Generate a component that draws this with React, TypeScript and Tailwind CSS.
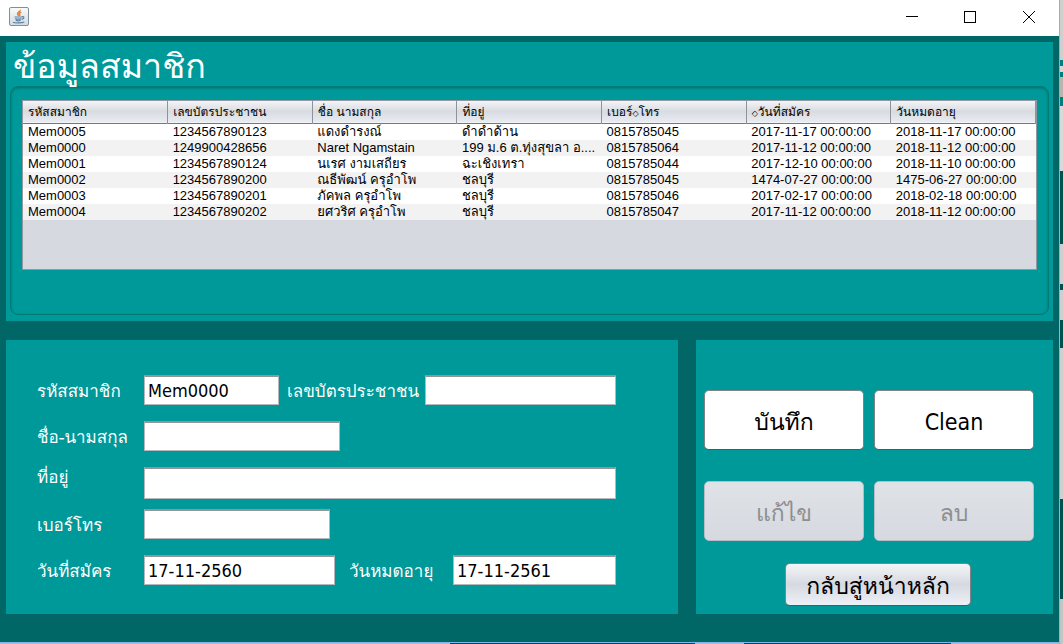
import { useState } from "react";

const columns = ["รหัสสมาชิก", "เลขบัตรประชาชน", "ชื่อ นามสกุล", "ที่อยู่", "เบอร์◇โทร", "◇วันที่สมัคร", "วันหมดอายุ"];

const rows = [
  ["Mem0005", "1234567890123", "แดงดำรงณ์", "ดำดำด้าน", "0815785045", "2017-11-17 00:00:00", "2018-11-17 00:00:00"],
  ["Mem0000", "1249900428656", "Naret Ngamstain", "199 ม.6 ต.ทุ่งสุขลา อ....", "0815785064", "2017-11-12 00:00:00", "2018-11-12 00:00:00"],
  ["Mem0001", "1234567890124", "นเรศ งามเสถียร", "ฉะเชิงเทรา", "0815785044", "2017-12-10 00:00:00", "2018-11-10 00:00:00"],
  ["Mem0002", "1234567890200", "ณธีพัฒน์ ครุอำโพ", "ชลบุรี", "0815785045", "1474-07-27 00:00:00", "1475-06-27 00:00:00"],
  ["Mem0003", "1234567890201", "ภัคพล ครุอำโพ", "ชลบุรี", "0815785046", "2017-02-17 00:00:00", "2018-02-18 00:00:00"],
  ["Mem0004", "1234567890202", "ยศวริศ ครุอำโพ", "ชลบุรี", "0815785047", "2017-11-12 00:00:00", "2018-11-12 00:00:00"],
];

function JavaIcon() {
  return (
    <svg width="20" height="19" viewBox="0 0 20 19" aria-hidden="true">
      <defs>
        <linearGradient id="tile" x1="0" y1="0" x2="0" y2="1">
          <stop offset="0" stopColor="#fafafa" />
          <stop offset="1" stopColor="#cfdbe3" />
        </linearGradient>
      </defs>
      <rect x="0.5" y="0.5" width="19" height="18" rx="1.5" fill="url(#tile)" stroke="#7f8f9c" />
      <path d="M11 3c.8 1.500-3.200 2.500-2.400 4.200.4.900 1 1.200 1 1.800M12.300 5.200c-1.500.5-2.500 1.200-1.800 2.100.6.800.3 1.200-.2 1.700" fill="none" stroke="#e8823a" strokeWidth="1.600" />
      <path d="M5.500 10h8M6.200 11.600c1.500.6 4.500.6 6 0M6.800 13.300c1.500.6 3.500.6 4.800 0M13 9.700c2.600-.5 2.400 2-.4 2.600M4 15.200c2 .9 9 .9 11.300-.2" fill="none" stroke="#5f83a3" strokeWidth="1.200" />
    </svg>
  );
}

function TitleBar() {
  return (
    <header className="flex h-9 items-start justify-between bg-white pl-[9px]">
      <div className="pt-[7px]"><JavaIcon /></div>
      <div className="flex">
        <button aria-label="Minimize" className="flex h-[34px] w-[58px] items-center justify-center">
          <svg width="12" height="12" viewBox="0 0 12 12" stroke="#000"><path d="M0 5.500h12" /></svg>
        </button>
        <button aria-label="Maximize" className="flex h-[34px] w-[58px] items-center justify-center">
          <svg width="12" height="12" viewBox="0 0 12 12" fill="none" stroke="#000"><rect x="0.5" y="0.5" width="11" height="11" /></svg>
        </button>
        <button aria-label="Close" className="flex h-[34px] w-[60px] items-center justify-center">
          <svg width="12" height="12" viewBox="0 0 12 12" stroke="#000"><path d="M0 0l12 12M12 0L0 12" /></svg>
        </button>
      </div>
    </header>
  );
}

function ColumnTitle({ text }: { text: string }) {
  return (
    <>
      {text.split(/(◇)/).map((part, i) =>
        part === "◇" ? <span key={i} className="font-['DejaVu_Sans',sans-serif] text-[8px] leading-none">◇</span> : part,
      )}
    </>
  );
}

function MemberTable() {
  return (
    <div className="h-[170px] overflow-hidden border border-[#9297a1] bg-[#d6d9e0]">
      <table className="w-full table-fixed border-collapse text-[13px] leading-4 text-black">
        <thead>
          <tr className="h-[22px] border-b border-[#73777f] bg-linear-to-b from-[#f4f5f7] via-[#d8dbe0] to-[#e8ebf2]">
            {columns.map((c) => (
              <th key={c} className="border-r border-[#8e929b] py-0 pl-[5px] text-left text-[12px] leading-4 font-normal whitespace-nowrap">
                <ColumnTitle text={c} />
              </th>
            ))}
          </tr>
        </thead>
        <tbody>
          {rows.map((r) => (
            <tr key={r[0]} className="h-4 bg-white even:bg-[#f2f2f2]">
              {r.map((v, i) => (
                <td key={i} className="h-4 p-0 pl-[5px]">
                  <div className="h-4 whitespace-nowrap">{v}</div>
                </td>
              ))}
            </tr>
          ))}
        </tbody>
      </table>
    </div>
  );
}

type FieldProps = { id: string; label: string; initial?: string; labelClass: string; inputClass: string };

function Field({ id, label, initial = "", labelClass, inputClass }: FieldProps) {
  const [value, setValue] = useState(initial);
  return (
    <>
      <label htmlFor={id} className={`h-[30px] shrink-0 font-['Waree','Loma','Noto_Sans_Thai',sans-serif] text-[17px] whitespace-nowrap text-white ${labelClass}`}>{label}</label>
      <input
        id={id}
        value={value}
        onChange={(e) => setValue(e.target.value)}
        className={`min-w-0 border border-t-2 border-[#b4b8bc] border-t-[#939598] bg-white px-[3px] font-['DejaVu_Sans_Condensed','DejaVu_Sans',sans-serif] text-[18px] text-black outline-none ${inputClass}`}
      />
    </>
  );
}

function MemberForm() {
  return (
    <form className="flex min-w-0 flex-1 flex-col bg-[#009999] pt-[35px] pr-[62px] pb-7 pl-[31px]">
      <div className="mb-4 flex">
        <Field id="code" label="รหัสสมาชิก" initial="Mem0000" labelClass="w-[107px] leading-8" inputClass="h-[30px] w-[135px]" />
        <Field id="card" label="เลขบัตรประชาชน" labelClass="ml-2 w-[138px] leading-8" inputClass="h-[30px] flex-1" />
      </div>
      <div className="mb-4 flex">
        <Field id="name" label="ชื่อ-นามสกุล" labelClass="w-[107px] leading-8" inputClass="h-[30px] w-[196px]" />
      </div>
      <div className="mb-[10px] flex">
        <Field id="address" label="ที่อยู่" labelClass="w-[107px] leading-5" inputClass="h-8 flex-1" />
      </div>
      <div className="mb-4 flex">
        <Field id="phone" label="เบอร์โทร" labelClass="w-[107px] leading-8" inputClass="h-[30px] w-[186px]" />
      </div>
      <div className="flex">
        <Field id="start" label="วันที่สมัคร" initial="17-11-2560" labelClass="w-[107px] leading-8" inputClass="h-[30px] w-[191px]" />
        <Field id="end" label="วันหมดอายุ" initial="17-11-2561" labelClass="ml-[14px] w-[104px] leading-8" inputClass="h-[30px] flex-1" />
      </div>
    </form>
  );
}

function Actions() {
  const base = "rounded-[5px] border pt-1 font-['DejaVu_Sans_Condensed','Loma','Garuda','Waree','Noto_Sans_Thai_Looped','Noto_Sans_Thai',sans-serif]";
  return (
    <section className="flex w-[357px] shrink-0 flex-col items-center bg-[#009999] pt-[50px] pr-[19px] pb-2 pl-2">
      <div className="grid w-full grid-cols-2 gap-x-[10px] gap-y-[31px]">
        <button className={`${base} h-[60px] border-[#808488] border-b-[#51565c] bg-white text-[23px] text-black`}>บันทึก</button>
        <button className={`${base} h-[60px] border-[#808488] border-b-[#51565c] bg-white text-[23px] text-black`}>Clean</button>
        <button disabled className={`${base} h-[60px] border-[#b8bcc6] bg-linear-to-b from-[#dfe2e6] to-[#d6d9e0] text-[23px] text-[#8e8f91]`}>แก้ไข</button>
        <button disabled className={`${base} h-[60px] border-[#b8bcc6] bg-linear-to-b from-[#dfe2e6] to-[#d6d9e0] text-[23px] text-[#8e8f91]`}>ลบ</button>
      </div>
      <button className={`${base} mt-[22px] ml-[18px] h-[43px] w-[186px] border-[#808488] border-b-[#51565c] bg-linear-to-b from-[#f4f5f8] via-[#d6d9e0] to-[#edf0f6] text-[23px] text-black`}>กลับสู่หน้าหลัก</button>
    </section>
  );
}

function BackdropEdge() {
  return (
    <div className="flex w-[3px] shrink-0 flex-col" aria-hidden="true">
      <div className="h-[60px] bg-[#cfcfcf]" />
      <div className="h-[6px] bg-[#007d7d]" />
      <div className="h-[6px] bg-[#d6d6d6]" />
      <div className="h-[5px] bg-[#007d7d]" />
      <div className="h-[20px] bg-[#bcb4ac]" />
      <div className="h-[9px] bg-[#007d7d]" />
      <div className="h-[65px] bg-[#d9d9d9]" />
      <div className="h-[73px] bg-[#005252]" />
      <div className="h-[40px] bg-[#cfcfcf]" />
      <div className="h-[6px] bg-[#005252]" />
      <div className="h-[30px] bg-[#cfcfcf]" />
      <div className="h-[28px] bg-[#005252]" />
      <div className="h-[151px] bg-[#cfcfcf]" />
      <div className="h-[100px] bg-[#005252]" />
      <div className="flex-1 bg-[#c4c4c4]" />
    </div>
  );
}

export default function App() {
  return (
    <div className="flex min-h-screen bg-[#006666] font-['Liberation_Sans','Loma','Garuda','Waree','Noto_Sans_Thai_Looped','Noto_Sans_Thai',sans-serif]">
      <div className="flex min-w-0 flex-1 flex-col border-r border-[#7db7e8]">
        <TitleBar />
        <main className="flex flex-1 flex-col gap-[19px] px-[6px] pt-[6px]">
          <section className="bg-[#009999] px-1 pb-[6px]">
            <h1 className="h-[44px] pl-[3px] font-['Waree','Loma','Noto_Sans_Thai',sans-serif] text-[34px] leading-[48px] text-white">ข้อมูลสมาชิก</h1>
            <div className="h-[229px] rounded-lg border border-[#007878] px-[11px] pt-[13px] shadow-[inset_0_1px_3px_#006b6b]">
              <MemberTable />
            </div>
          </section>
          <div className="flex gap-[18px]">
            <MemberForm />
            <Actions />
          </div>
        </main>
        <div className="h-px bg-[#7db7e8]" aria-hidden="true" />
        <div className="flex h-px" aria-hidden="true">
          <div className="w-[450px] bg-[#b9b9b9]" />
          <div className="w-[245px] bg-[#004d4d]" />
          <div className="w-[49px] bg-[#b9b9b9]" />
          <div className="w-[207px] bg-[#004d4d]" />
          <div className="flex-1 bg-[#b9b9b9]" />
        </div>
      </div>
      <BackdropEdge />
    </div>
  );
}
